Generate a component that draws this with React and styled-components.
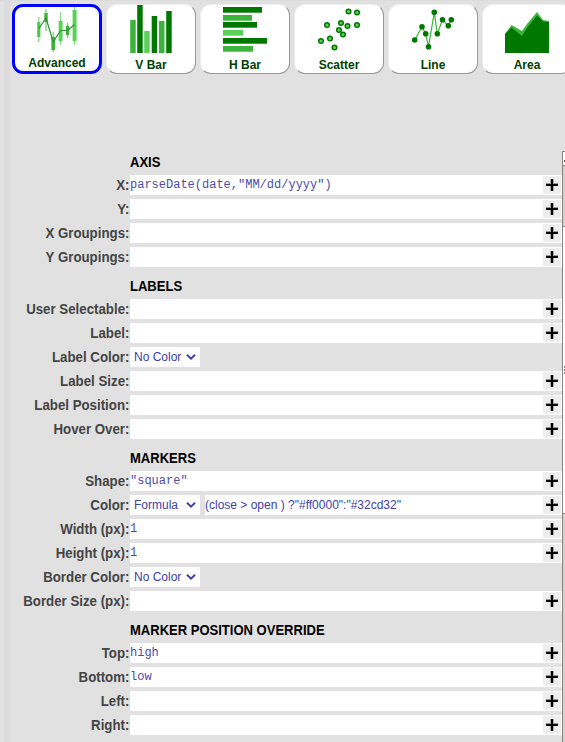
import React from "react";
import styled, { createGlobalStyle } from "styled-components";

const Global = createGlobalStyle`
  *{box-sizing:border-box}
  html,body{margin:0;padding:0;overflow:hidden;background:#e1e1e1}
  body{font-family:"Liberation Sans",Arial,sans-serif}
`;
const Page = styled.main`
  width:565px;height:742px;display:flex;overflow:hidden;background:#e1e1e1;
  border-top:1px solid #dcdcdc;
`;
const Divider = styled.div`
  flex:none;width:6px;margin-left:4px;background:#dcdcdc;
`;
const Content = styled.div`
  flex:none;width:555px;display:flex;flex-direction:column;
`;
const Tabs = styled.nav`
  display:flex;flex:none;gap:4px;padding:3px 0 0 2px;height:151px;width:555px;overflow:hidden;
`;
const Tab = styled.button`
  flex:none;width:90px;height:70px;padding:0;border-radius:11px;background:#fff;
  border:${p => (p.$active ? "3px solid #0000ff" : "1px solid")};
  border-color:${p => (p.$active ? "#0000ff" : "#eeeeee #999999 #999999 #eeeeee")};
  display:flex;flex-direction:column;align-items:center;justify-content:flex-start;
  font:bold 12px/14px "Liberation Sans",Arial,sans-serif;color:#004000;
`;
const Art = styled.svg`
  display:block;flex:none;width:64px;height:49px;
  margin-top:${p => (p.$active ? "-2px" : "0")};
  margin-bottom:${p => (p.$active ? "2px" : "4px")};
`;
const Body = styled.div`display:flex;flex:1;`;
const Form = styled.div`width:552px;flex:none;`;
const Section = styled.section`
  display:flex;flex-direction:column;gap:4px;padding-bottom:4px;
`;
const Heading = styled.h2`
  margin:0 0 0 120px;height:${p => (p.$first ? "19px" : "24px")};
  padding-top:${p => (p.$first ? "2px" : "7px")};
  font:bold 14px/16px "Liberation Sans",Arial,sans-serif;color:#000;
  white-space:nowrap;transform:scaleX(.93);transform-origin:left;
`;
const Row = styled.div`display:flex;height:20px;`;
const Label = styled.label`
  width:120px;flex:none;padding-right:.6px;text-align:right;white-space:nowrap;
  font:bold 14px/21px "Liberation Sans",Arial,sans-serif;color:#444;
  transform:scaleX(.948);transform-origin:right;
`;
const Field = styled.div`
  flex:1;height:20px;background:#fff;display:flex;justify-content:space-between;white-space:pre;
  color:${p => (p.$sans ? "#4040a8" : "#4c4cae")};
  font:${p => (p.$sans ? '12px/20px "Liberation Sans",Arial' : '12px/21px "Liberation Mono","Courier New"')},monospace;
`;
const Add = styled.button`
  width:18px;height:18px;margin:1px;padding:0;border:0;background:#eee;display:block;
  svg{display:block}
`;
const Select = styled.div`
  width:70px;height:20px;flex:none;margin-right:5px;padding:0 4px;background:#fff;color:#4040a8;
  display:flex;align-items:center;justify-content:space-between;white-space:nowrap;
  font:12px/20px "Liberation Sans",Arial,sans-serif;
`;
const Scrollbar = styled.div`
  width:3px;height:592px;margin-top:-1px;border-left:1px solid #858585;background:#d4d2d0;
`;
const ScrollArrow = styled.div`
  height:15px;background:#fff;border:solid #858585;border-width:1px 0;
  svg{display:block}
`;
const Thumb = styled.div`
  height:288px;margin-top:60px;background:#fcfcfc;border:solid #858585;border-width:1px 0;
  svg{display:block;margin-top:139px}
`;

const D = "#007800", M = "#3cb43c", L = "#5ad25a";
// [center x, wick top, wick bottom, body top, body bottom, fill, body width]
const candles = [
  [38.8, 17, 42, 22, 37, "#50c850", 3.2], [46, 9, 31, 13, 22, M, 3.4], [53.2, 32, 52, 37, 50, M, 3.7],
  [60.6, 12, 45, 21, 41, L, 4], [67.6, 23, 38, 26, 35, M, 3.4], [74.6, 7, 45, 10, 41, L, 4]
];
const bars = [[130, 20, M], [137, 5, D], [144, 31, L], [151.5, 16, D], [158.8, 21, M], [166, 11, D]];
const hbars = [[7, 39, D], [15, 29, M], [22, 34, D], [30, 20, L], [38, 44, D], [46, 30, M]];
const dots = [[348.5, 11.5], [357, 12.5], [327, 25], [341, 23], [347.5, 26], [357, 25], [339, 30], [343, 34.5], [330, 38.5], [321, 41], [334.5, 47.5]];
const linePts = [[414.7, 40], [422, 26.7], [425.7, 33.8], [428.5, 46.7], [434.3, 12.3], [437.3, 33.8], [442.5, 19.8], [448.3, 25.8], [451.3, 19.8]];

const art = {
  Advanced: <>
    {candles.map(([x, a, b, c, d, f, w]) => <g key={x} fill={f}>
      <rect x={x - .6} y={a} width="1.2" height={b - a} opacity=".75" />
      <rect x={x - w / 2} y={c} width={w} height={d - c} />
    </g>)}
    <path d="M39 28.5L46 18 53.2 42 60.6 30.5H67.6L74.6 24.5" fill="none" stroke="#2d962d" strokeWidth="1.2" />
  </>,
  "V Bar": bars.map(([x, y, f]) => <rect key={x} x={x + .2} y={y} width="5.5" height={53 - y} fill={f} />),
  "H Bar": hbars.map(([y, w, f]) => <rect key={y} x="223" y={y} width={w} height="5.7" fill={f} />),
  Scatter: dots.map(([x, y]) => <circle key={x + "-" + y} cx={x} cy={y} r="2.3" fill={L} stroke={D} strokeWidth="1.5" />),
  Line: <>
    <polyline points={linePts.join(" ")} fill="none" stroke={M} strokeWidth="1.2" />
    {linePts.map(([x, y]) => <circle key={x} cx={x} cy={y} r="2.8" fill={D} />)}
  </>,
  Area: <>
    <path d="M505 34L511.5 25 522 31 527 24 537 12 543 20 549 21V53H505Z" fill={M} />
    <path d="M505 34L511.5 27.5 522 36 527 28 537 15.5 543 21.5 549 22V53H505Z" fill={D} />
  </>
};

const sections = [
  ["AXIS", [["X:", 'parseDate(date,"MM/dd/yyyy")'], ["Y:"], ["X Groupings:"], ["Y Groupings:"]]],
  ["LABELS", [["User Selectable:"], ["Label:"], ["Label Color:", null, "No Color"], ["Label Size:"], ["Label Position:"], ["Hover Over:"]]],
  ["MARKERS", [["Shape:", '"square"'], ["Color:", '(close > open ) ?"#ff0000":"#32cd32"', "Formula"], ["Width (px):", "1"], ["Height (px):", "1"], ["Border Color:", null, "No Color"], ["Border Size (px):"]]],
  ["MARKER POSITION OVERRIDE", [["Top:", "high"], ["Bottom:", "low"], ["Left:"], ["Right:"]]]
];

function PropertyRow({ label, value, select }) {
  return (
    <Row>
      <Label>{label}</Label>
      {select && <Select>{select}<svg width="10" height="6" viewBox="0 0 10 6"><path d="M1 .8L5 4.6 9 .8" fill="none" stroke="#4040a8" strokeWidth="2" /></svg></Select>}
      {value !== null && <Field $sans={!!select}>
        <span>{value}</span>
        <Add aria-label="Add"><svg width="18" height="18">
          <path d="M3 8.5H15" stroke="#999" strokeWidth="3" />
          <path d="M9 3V15" stroke="#aaa" strokeWidth="4" />
          <path d="M3 9H15M9 3V15" stroke="#000" strokeWidth="2" />
        </svg></Add>
      </Field>}
    </Row>
  );
}

export default function App() {
  return (
    <>
      <Global />
      <Page>
        <Divider />
        <Content>
          <Tabs>
            {Object.keys(art).map((name, i) => (
              <Tab key={name} $active={i === 0}>
                <Art $active={i === 0} viewBox={`${25 + i * 94} 5 64 49`}>{art[name]}</Art>
                {name}
              </Tab>
            ))}
          </Tabs>
          <Body>
            <Form>
              {sections.map(([title, rows], i) => (
                <Section key={title}>
                  <Heading $first={i === 0}>{title}</Heading>
                  {rows.map(([label, value, select]) => <PropertyRow key={label} label={label} value={value} select={select} />)}
                </Section>
              ))}
            </Form>
            <Scrollbar>
              <ScrollArrow><svg width="2" height="13"><rect x="1" y="8" width="1" height="2" fill="#555" /></svg></ScrollArrow>
              <Thumb><svg width="2" height="9"><path d="M1 0h1v2h-1zM1 3h1v2h-1zM1 6h1v2h-1z" fill="#888" /></svg></Thumb>
            </Scrollbar>
          </Body>
        </Content>
      </Page>
    </>
  );
}
